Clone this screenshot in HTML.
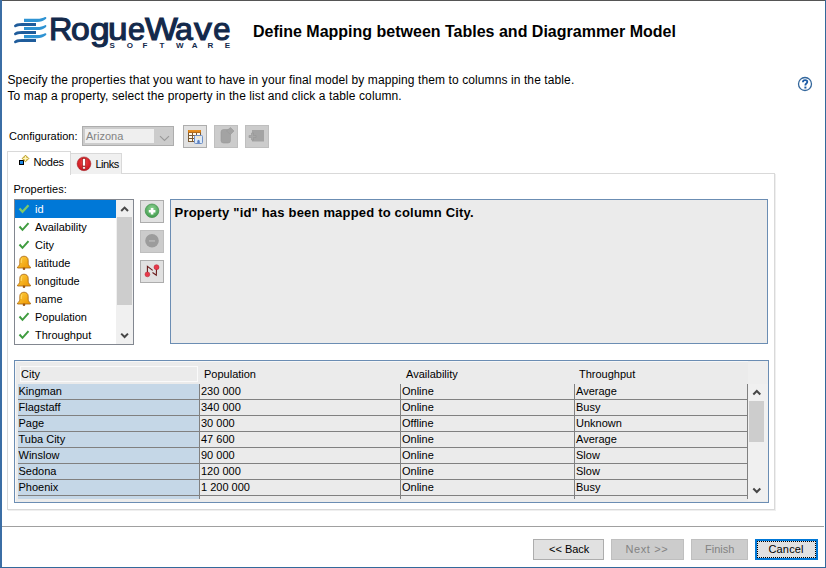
<!DOCTYPE html>
<html><head><meta charset="utf-8">
<style>
*{margin:0;padding:0;box-sizing:border-box}
html,body{width:826px;height:568px;overflow:hidden;background:#fff}
body{position:relative;font-family:"Liberation Sans",sans-serif;font-size:11px;color:#000}
.a{position:absolute;white-space:nowrap}
.t11{font-size:11px;line-height:13px}
.bd-l{position:absolute;left:0;top:0;width:2px;height:568px;background:#3b6ea5}
.bd-r{position:absolute;right:0;top:0;width:1px;height:568px;background:#33699b}
.bd-t{position:absolute;left:0;top:0;width:826px;height:1px;background:#555}
.bd-b{position:absolute;left:0;bottom:0;width:826px;height:1px;background:#33699b}
.btn{position:absolute;border:1px solid #adadad;background:#e1e1e1}
.btn.dis{border-color:#bfbfbf;background:#cccccc}
.th{top:7px;font-size:11px;line-height:13px}
.td{font-size:11px;line-height:15px}
.gl{left:3px;width:729px;height:1px;background:#808080}
.vl{top:23px;width:1px;height:115px;background:#808080}
</style></head>
<body>
<!-- window borders -->
<div class="bd-t"></div><div class="bd-l"></div><div class="bd-r"></div><div class="bd-b"></div>

<!-- logo -->
<svg class="a" style="left:12px;top:14px" width="36" height="32" viewBox="12 14 36 32">
  <g fill="#2e93d3"><path d="M24 18.8 L37 18.8 C40.5 18.8 42.8 18.2 45 17.0 C46.3 16.5 46.9 18.2 45.8 19.0 C43.5 21.1 40.5 21.9 37 21.9 L24 21.9 Z"/><path d="M24 27.0 L37 27.0 C40.5 27.0 42.8 26.4 45 25.2 C46.3 24.7 46.9 26.4 45.8 27.2 C43.5 29.3 40.5 30.1 37 30.1 L24 30.1 Z"/><path d="M24 35.1 L37 35.1 C40.5 35.1 42.8 34.5 45 33.3 C46.3 32.8 46.9 34.5 45.8 35.3 C43.5 37.4 40.5 38.2 37 38.2 L24 38.2 Z"/></g>
  <g fill="#1f5c9b">
    <path d="M36 23 L22 23 C18 23 15 23.8 14 25.5 C14 27 15 27.6 15.5 27.2 C17 26.2 19 25.9 22 25.9 L36 25.9 Z"/>
    <path d="M36 31 L22 31 C18 31 15 31.8 14 33.5 C14 35 15 35.6 15.5 35.2 C17 34.2 19 33.9 22 33.9 L36 33.9 Z"/>
    <path d="M36 39 L22 39 C18 39 15 39.8 14 41.5 C14 43 15 43.6 15.5 43.2 C17 42.2 19 41.9 22 41.9 L36 41.9 Z"/>
  </g>
</svg>
<div class="a" style="left:0;top:13.5px;font-size:31px;line-height:1;color:#13294b;-webkit-text-stroke:1.1px #13294b"><span class="a" style="left:48.52px;top:0;transform:scaleX(1.044);transform-origin:0 0">R</span><span class="a" style="left:71.26px;top:0;transform:scaleX(1.087);transform-origin:0 0">o</span><span class="a" style="left:89.71px;top:0;transform:scaleX(1.143);transform-origin:0 0">g</span><span class="a" style="left:107.99px;top:0;transform:scaleX(1.131);transform-origin:0 0">u</span><span class="a" style="left:127.56px;top:0;transform:scaleX(0.993);transform-origin:0 0">e</span><span class="a" style="left:145.25px;top:0;transform:scaleX(1.121);transform-origin:0 0">W</span><span class="a" style="left:175.41px;top:0;transform:scaleX(1.037);transform-origin:0 0">a</span><span class="a" style="left:194.15px;top:0;transform:scaleX(1.153);transform-origin:0 0">v</span><span class="a" style="left:213.25px;top:0;transform:scaleX(1.0);transform-origin:0 0">e</span></div>
<div class="a" style="left:0;top:42.3px;font-size:8px;line-height:1;font-weight:bold;color:#13294b"><span class="a" style="left:109.5px;top:0">S</span><span class="a" style="left:126.7px;top:0">O</span><span class="a" style="left:142.5px;top:0">F</span><span class="a" style="left:159.5px;top:0">T</span><span class="a" style="left:175.9px;top:0">W</span><span class="a" style="left:191.7px;top:0">A</span><span class="a" style="left:207.5px;top:0">R</span><span class="a" style="left:224.8px;top:0">E</span></div>

<!-- title -->
<div class="a" style="left:253px;top:23px;font-size:16px;line-height:18px;font-weight:bold">Define Mapping between Tables and Diagrammer Model</div>

<!-- description -->
<div class="a" style="left:7.5px;top:72px;font-size:12px;line-height:16px;letter-spacing:0.1px">Specify the properties that you want to have in your final model by mapping them to columns in the table.<br>To map a property, select the property in the list and click a table column.</div>

<!-- help icon -->
<svg class="a" style="left:797px;top:76px" width="16" height="16" viewBox="0 0 16 16">
  <circle cx="8" cy="8" r="6.5" fill="none" stroke="#34679c" stroke-width="1.3"/>
  <path d="M5.9 6.3 C5.9 4.9 6.8 4.1 8.1 4.1 C9.4 4.1 10.3 4.9 10.3 6 C10.3 7.3 8.6 7.6 8.4 8.9 L8.4 9.5" fill="none" stroke="#1d5ca6" stroke-width="1.8"/>
  <rect x="7.4" y="10.6" width="2" height="1.9" fill="#1d5ca6"/>
</svg>

<!-- configuration row -->
<div class="a t11" style="left:9px;top:130px">Configuration:</div>
<div class="a" style="left:82px;top:126px;width:92px;height:20px;border:1px solid #adadad;background:#cccccc">
  <div class="a" style="left:2px;top:2px;width:69px;height:14px;background:#efefef"></div>
  <div class="a t11" style="left:3px;top:3px;color:#838383">Arizona</div>
  <svg class="a" style="left:76px;top:8px" width="11" height="7" viewBox="0 0 11 7"><path d="M1 1.2 L5.5 5.5 L10 1.2" fill="none" stroke="#999" stroke-width="1.1"/></svg>
</div>
<div class="btn" style="left:183px;top:125px;width:24px;height:23px"></div>
<svg class="a" style="left:183px;top:125px" width="24" height="23" viewBox="183 125 24 23">
  <rect x="188" y="130" width="13" height="12" fill="#7a5a35"/>
  <rect x="188" y="130" width="13" height="2.6" fill="#d8780a"/>
  <rect x="188.6" y="130.4" width="11.8" height="1" fill="#f0a030"/>
  <g fill="#fff8e8"><rect x="189" y="133" width="3" height="2"/><rect x="193" y="133" width="3" height="2"/><rect x="197" y="133" width="3" height="2"/>
  <rect x="189" y="136" width="3" height="2"/><rect x="193" y="136" width="3" height="2"/><rect x="197" y="136" width="3" height="2"/>
  <rect x="189" y="139" width="3" height="2"/><rect x="193" y="139" width="3" height="2"/><rect x="197" y="139" width="3" height="2"/></g>
  <rect x="194.5" y="135.5" width="8" height="8" rx="1" fill="#dce9f7" stroke="#6d8fc8" stroke-width="1"/>
  <rect x="196.5" y="136" width="4" height="2.5" fill="#f2e6c8"/>
  <path d="M197.3 143.2 L197.3 140.8 L198.5 139.8 L199.7 140.8 L199.7 143.2 Z" fill="#5a7fc0"/>
</svg>
<div class="btn dis" style="left:214px;top:125px;width:24px;height:23px"></div>
<svg class="a" style="left:214px;top:125px" width="24" height="23" viewBox="214 125 24 23">
  <rect x="221" y="129.5" width="9.5" height="13.5" rx="2.5" fill="#a3a3a3" stroke="#999" stroke-width="0.6"/>
  <path d="M226.5 131 L230.5 127.5 L234 131 L230.5 134.5 Z" fill="#a3a3a3" stroke="#999" stroke-width="0.6"/>
</svg>
<div class="btn dis" style="left:245px;top:125px;width:24px;height:23px"></div>
<svg class="a" style="left:245px;top:125px" width="24" height="23" viewBox="245 125 24 23">
  <rect x="252" y="130" width="12" height="11.5" fill="#a3a3a3"/>
  <path d="M251.5 133 h2 v2.5 h2.5 v2 h-2.5 v2.5 h-2 v-2.5 h-2.5 v-2 h2.5 Z" fill="#a8a8a8" stroke="#969696" stroke-width="0.6"/>
</svg>

<!-- tabs -->
<div class="a" style="left:7px;top:173px;width:768px;height:337px;border:1px solid #d9d9d9;background:#fff;box-shadow:1px 1px 0 #efefef"></div>
<div class="a" style="left:70px;top:153px;width:52px;height:21px;border:1px solid #d9d9d9;border-bottom:none;background:#f0f0f0"></div>
<div class="a" style="left:7px;top:151px;width:64px;height:24px;border:1px solid #d9d9d9;border-bottom:none;background:#fff"></div>
<svg class="a" style="left:16px;top:152px" width="16" height="16" viewBox="16 152 16 16">
  <rect x="19.5" y="160.5" width="4" height="4" fill="#1e88e5" stroke="#000" stroke-width="1"/>
  <path d="M25.5 155.2 L28.8 158.5 L25.5 161.8 L22.2 158.5 Z" fill="#e6cf6a" stroke="#b89a22" stroke-width="1"/>
  <path d="M25.5 156.2 V160.8 M23.2 158.5 H27.8" stroke="#fff6c0" stroke-width="1"/>
</svg>
<div class="a t11" style="left:33.5px;top:156px;letter-spacing:-0.35px">Nodes</div>
<svg class="a" style="left:76px;top:156px" width="16" height="16" viewBox="76 156 16 16">
  <defs><radialGradient id="rg" cx="0.5" cy="0.4" r="0.6"><stop offset="0" stop-color="#f04545"/><stop offset="1" stop-color="#c8141e"/></radialGradient></defs>
  <circle cx="84" cy="163.8" r="6.9" fill="url(#rg)" stroke="#9a1a20" stroke-width="0.5"/>
  <rect x="82.6" y="158.6" width="2.8" height="7.4" fill="#fff" stroke="#8e1a1a" stroke-width="0.6"/>
  <rect x="82.6" y="166.8" width="2.8" height="2.2" fill="#fff" stroke="#8e1a1a" stroke-width="0.6"/>
</svg>
<div class="a t11" style="left:95.5px;top:158px;letter-spacing:-0.5px">Links</div>

<!-- properties -->
<div class="a t11" style="left:13.5px;top:183px">Properties:</div>
<div class="a" style="left:14px;top:199px;width:120px;height:146px;border:1px solid #828790;background:#fff;overflow:hidden">
  <div class="a" style="left:0;top:0;width:101px;height:18px;background:#0078d7"></div>
  <div class="a" style="left:20px;top:0;line-height:18px;color:#fff">id</div>
  <div class="a" style="left:20px;top:18px;line-height:18px">Availability</div>
  <div class="a" style="left:20px;top:36px;line-height:18px">City</div>
  <div class="a" style="left:20px;top:54px;line-height:18px">latitude</div>
  <div class="a" style="left:20px;top:72px;line-height:18px">longitude</div>
  <div class="a" style="left:20px;top:90px;line-height:18px">name</div>
  <div class="a" style="left:20px;top:108px;line-height:18px">Population</div>
  <div class="a" style="left:20px;top:126px;line-height:18px">Throughput</div>
  <div class="a" style="left:101px;top:0;width:17px;height:144px;background:#f0f0f0"></div>
  <div class="a" style="left:102px;top:17px;width:15px;height:88px;background:#cdcdcd"></div>
</div>
<svg class="a" style="left:14px;top:199px" width="120" height="146" viewBox="14 199 120 146"><defs><linearGradient id="bellg" x1="0" y1="0" x2="1" y2="1"><stop offset="0" stop-color="#ffd040"/><stop offset="1" stop-color="#ec9400"/></linearGradient></defs><path d="M19.5 208.5 L22.5 211.8 L28.5 205.2" fill="none" stroke="#7cc96a" stroke-width="2.2"/><path d="M19.5 226.5 L22.5 229.8 L28.5 223.2" fill="none" stroke="#3f9c3f" stroke-width="2"/><path d="M19.5 244.5 L22.5 247.8 L28.5 241.2" fill="none" stroke="#3f9c3f" stroke-width="2"/><g transform="translate(15 254)"><path d="M9 2.2 C6.6 2.2 4.8 3.8 4.8 6.2 L4.8 9.2 C4.8 11 3.6 12.2 2.6 13 L2.6 14 L15.4 14 L15.4 13 C14.4 12.2 13.2 11 13.2 9.2 L13.2 6.2 C13.2 3.8 11.4 2.2 9 2.2 Z" fill="url(#bellg)" stroke="#a86412" stroke-width="0.8"/><path d="M7 4.5 C6.2 5.5 6.2 7 6.2 9" stroke="#ffd866" stroke-width="1.2" fill="none"/><circle cx="9" cy="14.8" r="1.3" fill="#9a5614"/></g><g transform="translate(15 272)"><path d="M9 2.2 C6.6 2.2 4.8 3.8 4.8 6.2 L4.8 9.2 C4.8 11 3.6 12.2 2.6 13 L2.6 14 L15.4 14 L15.4 13 C14.4 12.2 13.2 11 13.2 9.2 L13.2 6.2 C13.2 3.8 11.4 2.2 9 2.2 Z" fill="url(#bellg)" stroke="#a86412" stroke-width="0.8"/><path d="M7 4.5 C6.2 5.5 6.2 7 6.2 9" stroke="#ffd866" stroke-width="1.2" fill="none"/><circle cx="9" cy="14.8" r="1.3" fill="#9a5614"/></g><g transform="translate(15 290)"><path d="M9 2.2 C6.6 2.2 4.8 3.8 4.8 6.2 L4.8 9.2 C4.8 11 3.6 12.2 2.6 13 L2.6 14 L15.4 14 L15.4 13 C14.4 12.2 13.2 11 13.2 9.2 L13.2 6.2 C13.2 3.8 11.4 2.2 9 2.2 Z" fill="url(#bellg)" stroke="#a86412" stroke-width="0.8"/><path d="M7 4.5 C6.2 5.5 6.2 7 6.2 9" stroke="#ffd866" stroke-width="1.2" fill="none"/><circle cx="9" cy="14.8" r="1.3" fill="#9a5614"/></g><path d="M19.5 316.5 L22.5 319.8 L28.5 313.2" fill="none" stroke="#3f9c3f" stroke-width="2"/><path d="M19.5 334.5 L22.5 337.8 L28.5 331.2" fill="none" stroke="#3f9c3f" stroke-width="2"/><path d="M121.2 211 L124.6 207.6 L128 211" fill="none" stroke="#474747" stroke-width="2"/><path d="M121.2 333.6 L124.6 337 L128 333.6" fill="none" stroke="#474747" stroke-width="2"/></svg>
<div class="btn" style="left:140px;top:200px;width:24px;height:23px"></div>
<div class="btn dis" style="left:140px;top:230px;width:24px;height:23px"></div>
<div class="btn" style="left:140px;top:260px;width:24px;height:23px"></div>

<svg class="a" style="left:140px;top:200px" width="24" height="84" viewBox="140 200 24 84">
  <defs><radialGradient id="gg" cx="0.5" cy="0.35" r="0.65"><stop offset="0" stop-color="#8fd494"/><stop offset="1" stop-color="#3f9a4c"/></radialGradient></defs>
  <circle cx="152" cy="210.8" r="6.8" fill="url(#gg)" stroke="#3d8f48" stroke-width="0.7"/>
  <path d="M150.8 208 h2.6 v2 h2 v2.6 h-2 v2 h-2.6 v-2 h-2 v-2.6 h2 Z" fill="#fff"/>
  <circle cx="152" cy="240.8" r="6.8" fill="#9c9c9c"/>
  <rect x="149" y="240" width="6" height="1.8" fill="#b3b3b3"/>
  <path d="M147.4 272 L147.4 266.4 L152.7 270.4" fill="none" stroke="#6a1a1a" stroke-width="1.1"/>
  <path d="M152.5 272.5 L156.3 275.3 L156.5 269" fill="none" stroke="#6a1a1a" stroke-width="1.1"/>
  <circle cx="147.4" cy="274.4" r="2.4" fill="#e8384a" stroke="#b01c2a" stroke-width="0.5"/>
  <circle cx="156.5" cy="267.2" r="2.5" fill="#e8384a" stroke="#b01c2a" stroke-width="0.5"/>
</svg>
<!-- message -->
<div class="a" style="left:170px;top:199px;width:598px;height:145px;border:1px solid #6b8db3;background:#ebebeb"></div>
<div class="a" style="left:174.6px;top:205px;font-size:13px;line-height:15px;font-weight:bold;letter-spacing:0.185px">Property "id" has been mapped to column City.</div>

<!-- table -->
<div class="a" style="left:14px;top:360px;width:755px;height:143px;border:1px solid #6b8db3;background:#ebebeb;overflow:hidden" id="tbl">
<div class="a" style="left:0;top:0;width:753px;height:1px;background:#f7f7f7"></div><div class="a" style="left:0;top:0;width:1px;height:141px;background:#f7f7f7"></div><div class="a" style="left:5px;top:5px;width:178px;height:16px;border:1px solid #fafafa"></div>
<div class="a" style="left:733px;top:0;width:20px;height:23px;background:#eeeeee"></div>
<div class="a th" style="left:6px">City</div>
<div class="a th" style="left:189px">Population</div>
<div class="a th" style="left:391px">Availability</div>
<div class="a th" style="left:564px">Throughput</div>
<div class="a" style="left:3px;top:23px;width:181px;height:115px;background:#c5d7e7"></div>
<div class="a gl" style="top:38px"></div>
<div class="a gl" style="top:54px"></div>
<div class="a gl" style="top:70px"></div>
<div class="a gl" style="top:86px"></div>
<div class="a gl" style="top:102px"></div>
<div class="a gl" style="top:118px"></div>
<div class="a gl" style="top:134px"></div>
<div class="a vl" style="left:184px"></div>
<div class="a vl" style="left:385px"></div>
<div class="a vl" style="left:559px"></div>
<div class="a vl" style="left:732px"></div>
<div class="a td" style="left:3.5px;top:23px">Kingman</div>
<div class="a td" style="left:186px;top:23px">230 000</div>
<div class="a td" style="left:387px;top:23px">Online</div>
<div class="a td" style="left:561px;top:23px">Average</div>
<div class="a td" style="left:3.5px;top:39px">Flagstaff</div>
<div class="a td" style="left:186px;top:39px">340 000</div>
<div class="a td" style="left:387px;top:39px">Online</div>
<div class="a td" style="left:561px;top:39px">Busy</div>
<div class="a td" style="left:3.5px;top:55px">Page</div>
<div class="a td" style="left:186px;top:55px">30 000</div>
<div class="a td" style="left:387px;top:55px">Offline</div>
<div class="a td" style="left:561px;top:55px">Unknown</div>
<div class="a td" style="left:3.5px;top:71px">Tuba City</div>
<div class="a td" style="left:186px;top:71px">47 600</div>
<div class="a td" style="left:387px;top:71px">Online</div>
<div class="a td" style="left:561px;top:71px">Average</div>
<div class="a td" style="left:3.5px;top:87px">Winslow</div>
<div class="a td" style="left:186px;top:87px">90 000</div>
<div class="a td" style="left:387px;top:87px">Online</div>
<div class="a td" style="left:561px;top:87px">Slow</div>
<div class="a td" style="left:3.5px;top:103px">Sedona</div>
<div class="a td" style="left:186px;top:103px">120 000</div>
<div class="a td" style="left:387px;top:103px">Online</div>
<div class="a td" style="left:561px;top:103px">Slow</div>
<div class="a td" style="left:3.5px;top:119px">Phoenix</div>
<div class="a td" style="left:186px;top:119px">1 200 000</div>
<div class="a td" style="left:387px;top:119px">Online</div>
<div class="a td" style="left:561px;top:119px">Busy</div>
<div class="a" style="left:733px;top:23px;width:20px;height:117px;background:#f0f0f0"></div>
<div class="a" style="left:734px;top:40px;width:15px;height:41px;background:#cdcdcd"></div>
<svg class="a" style="left:737px;top:28px" width="10" height="7" viewBox="0 0 10 7"><path d="M1.3 5.5 L4.8 2 L8.3 5.5" fill="none" stroke="#474747" stroke-width="2"/></svg>
<svg class="a" style="left:737px;top:126px" width="10" height="7" viewBox="0 0 10 7"><path d="M1.3 1.5 L4.8 5 L8.3 1.5" fill="none" stroke="#474747" stroke-width="2"/></svg>
</div>

<!-- separator -->
<div class="a" style="left:2px;top:526px;width:822px;height:1px;background:#a0a0a0"></div>

<!-- buttons -->
<div class="btn" style="left:533px;top:539px;width:71px;height:21px"></div>
<div class="a t11" style="left:549px;top:543px">&lt;&lt; Back</div>
<div class="btn dis" style="left:611px;top:539px;width:73px;height:21px"></div>
<div class="a t11" style="left:625.5px;top:543px;color:#838383;letter-spacing:0.6px">Next &gt;&gt;</div>
<div class="btn dis" style="left:691px;top:539px;width:57px;height:21px"></div>
<div class="a t11" style="left:705px;top:543px;color:#838383">Finish</div>
<div class="btn" style="left:755px;top:539px;width:63px;height:21px;border:2px solid #0078d7"></div>
<div class="a" style="left:757px;top:541px;width:59px;height:17px;border:1px dotted #000"></div>
<div class="a t11" style="left:768.5px;top:543px;letter-spacing:0.15px">Cancel</div>
</body></html>
